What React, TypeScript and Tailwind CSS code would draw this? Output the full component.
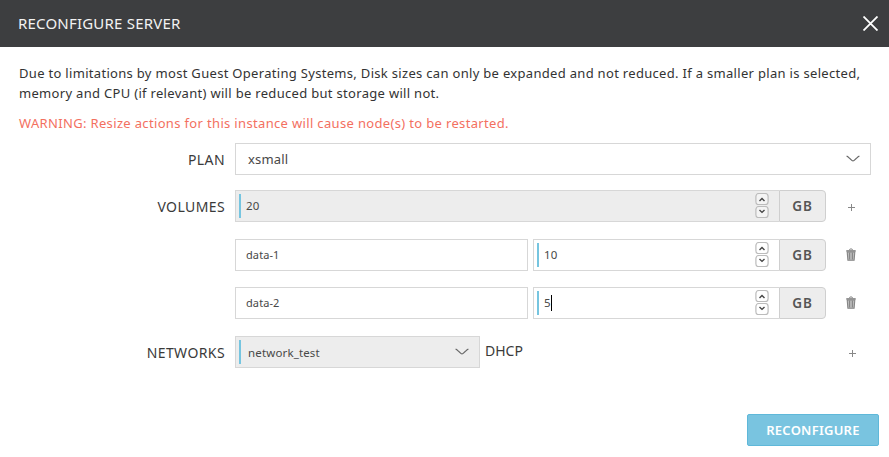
import React from "react";

const Chevron = ({ className = "" }: { className?: string }) => (
  <svg className={className} width="14" height="8" viewBox="0 0 14 8" fill="none" stroke="#666" strokeWidth="1.2">
    <path d="M.6 1 C2 1.7 2.7 2.5 4 3.7 C5.3 5 6 6 7 6 C8 6 8.700 5 10 3.700 C11.300 2.500 12 1.700 13.400 1" />
  </svg>
);

const StepButton = ({ down = false }: { down?: boolean }) => (
  <svg width="14" height="12" viewBox="0 0 14 12" fill="none">
    <rect x=".9" y=".5" width="12.200" height="11.200" rx="3" fill="#fff" fillOpacity=".4" stroke="#bcbcbc" strokeWidth="1.200" />
    <path d={down ? "M4.500 4 7 6.400 9.500 4" : "M4.500 7.900 7 5.500 9.500 7.900"} stroke="#444" strokeWidth="1.400" />
  </svg>
);

const Trash = () => (
  <svg className="-mt-px mr-px" width="10" height="13" viewBox="0 0 10 13" fill="none" stroke="#858585">
    <path d="M3.300 2.200C3.300.4 6.700.4 6.700 2.200" />
    <path d="M.6 3.300V2.600h8.800v.7z" fill="#858585" strokeWidth=".8" />
    <path d="M1.200 4 1.900 12.200h6.200L8.800 4z" fill="#bcbcbc" strokeWidth="1.100" />
    <path d="M3.600 4.500v7M6.400 4.500v7" strokeWidth="1.100" />
  </svg>
);

const Plus = () => (
  <svg className="mt-0.5" width="7" height="7" viewBox="0 0 7 7" stroke="#888">
    <path d="M0 3.500h7M3.500 0v7" />
  </svg>
);

const SizeInput = ({ value, muted = false, caret = false }: { value: string; muted?: boolean; caret?: boolean }) => (
  <div className="flex h-8 flex-1">
    <div className={`flex flex-1 items-center border border-r-0 border-[#d7d7d7] pl-[3px] pr-[10px] ${muted ? "bg-[#ededed]" : "bg-white"}`}>
      <span className="h-6 w-[2px] bg-[#76c5e0]" />
      <span className="ml-[5px] text-[11.5px] leading-4 tracking-[0.1px]">{value}</span>
      {caret && <span className="h-4 w-px bg-black" />}
      <span className="-mt-px ml-auto flex flex-col gap-px">
        <StepButton />
        <StepButton down />
      </span>
    </div>
    <div className="flex w-[47px] items-center justify-center rounded-r border border-[#cfcfcf] bg-[#ededed] text-[13.5px] font-semibold tracking-[0.9px] text-[#555]">
      GB
    </div>
  </div>
);

const Label = ({ children }: { children?: React.ReactNode }) => (
  <div className="w-[225px] shrink-0 pt-0.5 text-right text-sm tracking-[0.4px] text-[#3a3a3a]">{children}</div>
);

const Action = ({ children }: { children: React.ReactNode }) => (
  <div className="flex w-[50px] justify-center">{children}</div>
);

const VolumeRow = ({ name, size, caret = false }: { name: string; size: string; caret?: boolean }) => (
  <div className="flex items-center">
    <Label />
    <div className="ml-[10px] flex h-8 w-[293px] items-center border border-[#d7d7d7] pl-[10px] text-[11px] tracking-[0.1px]">{name}</div>
    <div className="ml-[5px] flex w-[293px]">
      <SizeInput value={size} caret={caret} />
    </div>
    <Action><Trash /></Action>
  </div>
);

export default function App() {
  return (
    <div className="h-[457px] w-[889px] overflow-hidden bg-white font-['Noto_Sans','Open_Sans',sans-serif] text-[#484848]">
      <header className="flex h-[47px] items-center justify-between bg-[#3d3e40] pl-[18px] pr-[11px] text-white">
        <h1 className="text-[15px] tracking-[0.2px] text-[#f2f2f2]">RECONFIGURE SERVER</h1>
        <svg width="15" height="15" viewBox="0 0 15 15" stroke="white" strokeWidth="1.800">
          <path d="M.5.5l14 14M14.500.5l-14 14" />
        </svg>
      </header>
      <div className="pl-[19px] pt-4 text-[13px] leading-5 text-[#333]">
        <p className="whitespace-nowrap tracking-[0.31px]">
          Due to limitations by most Guest Operating Systems, Disk sizes can only be expanded and not reduced. If a smaller plan is selected,
        </p>
        <p className="whitespace-nowrap tracking-[0.31px]">memory and CPU (if relevant) will be reduced but storage will not.</p>
        <p className="mt-[10px] whitespace-nowrap tracking-[0.34px] text-[#f3705f]">
          WARNING: Resize actions for this instance will cause node(s) to be restarted.
        </p>
      </div>
      <div className="mt-[10px] flex items-center">
        <Label>PLAN</Label>
        <div className="ml-[10px] flex h-8 w-[636px] items-center justify-between border border-[#d7d7d7] pl-3 pr-[10px] text-[13px]">
          <span className="pt-0.5 tracking-[0.15px]">xsmall</span>
          <Chevron />
        </div>
      </div>
      <div className="mt-[15px] flex items-center">
        <Label>VOLUMES</Label>
        <div className="ml-[10px] flex w-[591px]">
          <SizeInput value="20" muted />
        </div>
        <Action><Plus /></Action>
      </div>
      <div className="mt-[17px] flex flex-col gap-4">
        <VolumeRow name="data-1" size="10" />
        <VolumeRow name="data-2" size="5" caret />
      </div>
      <div className="mt-[17px] flex items-center">
        <Label>NETWORKS</Label>
        <div className="ml-[10px] flex h-8 w-[245px] items-center border border-[#d7d7d7] bg-[#ededed] pl-[3px] pr-[10px] text-[11.5px]">
          <span className="h-6 w-[2px] bg-[#76c5e0]" />
          <span className="ml-[7px] pt-0.5 tracking-[0.15px]">network_test</span>
          <Chevron className="ml-auto" />
        </div>
        <span className="-mt-0.5 ml-[5px] text-sm text-[#3a3a3a]">DHCP</span>
        <div className="ml-auto mr-[12px]"><Action><Plus /></Action></div>
      </div>
      <div className="mt-[46px] flex justify-end pr-[10px]">
        <button className="h-8 w-[132px] rounded-[2px] border border-[#5fb8d9] bg-[#79c4e0] pt-px text-[13px] font-semibold tracking-[0.25px] text-white">RECONFIGURE</button>
      </div>
    </div>
  );
}
